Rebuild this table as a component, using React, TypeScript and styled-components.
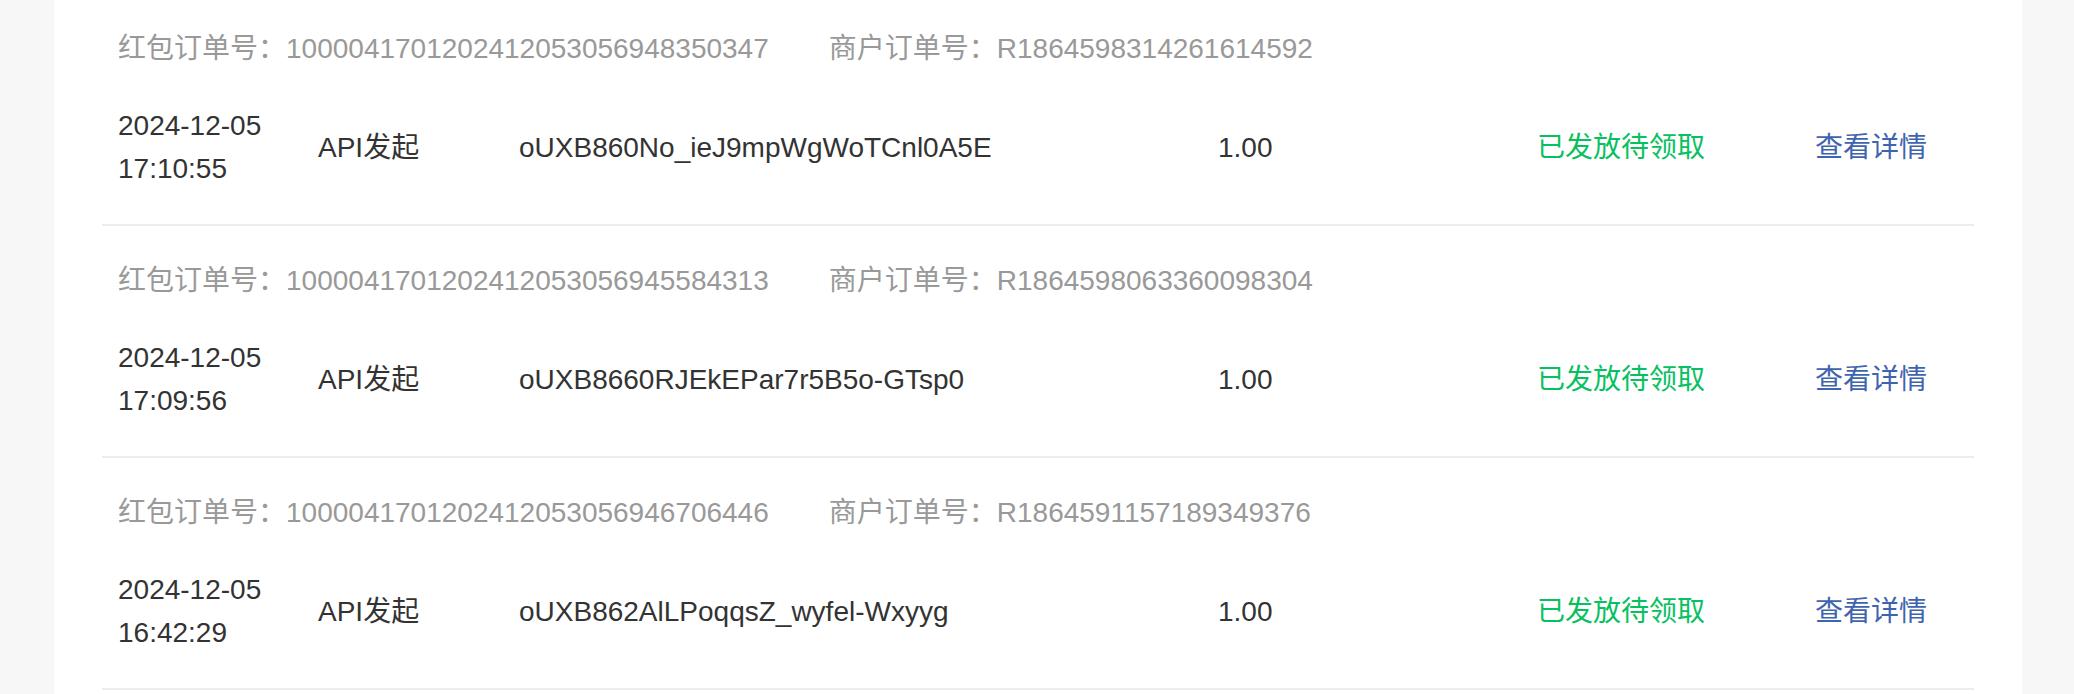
import styled, { createGlobalStyle } from "styled-components";

const GlobalStyle = createGlobalStyle`
  html, body {
    margin: 0;
    padding: 0;
    background: #f7f7f7;
    overflow: hidden;
  }
  body {
    font-family: "Liberation Sans", "Noto Sans CJK SC", sans-serif;
  }
`;

const Page = styled.div`
  height: 100vh;
  padding: 0 52px 0 54px;
  box-sizing: border-box;
`;

const Card = styled.div`
  height: 100%;
  background: #fff;
  padding: 0 48px;
  overflow: hidden;
`;

// the list is scrolled a few pixels down in the screenshot
const List = styled.ul`
  list-style: none;
  margin: -6px 0 0;
  padding: 0;
`;

const Item = styled.li`
  padding: 34px 0 34px 16px;
  border-bottom: 2px solid #ededed;
`;

const OrderLine = styled.div`
  display: flex;
  font-size: 28px;
  line-height: 42px;
  color: #999;
  white-space: nowrap;
`;

const OrderField = styled.span`
  & + & {
    margin-left: 60px;
  }
`;

const Body = styled.div`
  display: flex;
  align-items: center;
  margin-top: 34px;
  font-size: 28px;
  line-height: 43px;
  color: #333;
  white-space: nowrap;
`;

const Cell = styled.div<{ $w?: number }>`
  flex: ${({ $w }) => ($w ? `0 0 ${$w}px` : "1")};
`;

const Status = styled(Cell)`
  color: #07c160;
`;

const Action = styled.a`
  color: #3f64af;
  text-decoration: none;
  cursor: pointer;
`;

const rows = [
  {
    hb: "1000041701202412053056948350347",
    mch: "R1864598314261614592",
    date: "2024-12-05",
    time: "17:10:55",
    openid: "oUXB860No_ieJ9mpWgWoTCnl0A5E",
  },
  {
    hb: "1000041701202412053056945584313",
    mch: "R1864598063360098304",
    date: "2024-12-05",
    time: "17:09:56",
    openid: "oUXB8660RJEkEPar7r5B5o-GTsp0",
  },
  {
    hb: "1000041701202412053056946706446",
    mch: "R1864591157189349376",
    date: "2024-12-05",
    time: "16:42:29",
    openid: "oUXB862AlLPoqqsZ_wyfel-Wxyyg",
  },
];

export default function App() {
  return (
    <>
      <GlobalStyle />
      <Page>
        <Card>
          <List>
            {rows.map((r) => (
              <Item key={r.hb}>
                <OrderLine>
                  <OrderField>红包订单号：{r.hb}</OrderField>
                  <OrderField>商户订单号：{r.mch}</OrderField>
                </OrderLine>
                <Body>
                  <Cell $w={200}>
                    <div>{r.date}</div>
                    <div>{r.time}</div>
                  </Cell>
                  <Cell $w={201}>API发起</Cell>
                  <Cell $w={699}>{r.openid}</Cell>
                  <Cell $w={319}>1.00</Cell>
                  <Status $w={278}>已发放待领取</Status>
                  <Cell>
                    <Action>查看详情</Action>
                  </Cell>
                </Body>
              </Item>
            ))}
          </List>
        </Card>
      </Page>
    </>
  );
}
